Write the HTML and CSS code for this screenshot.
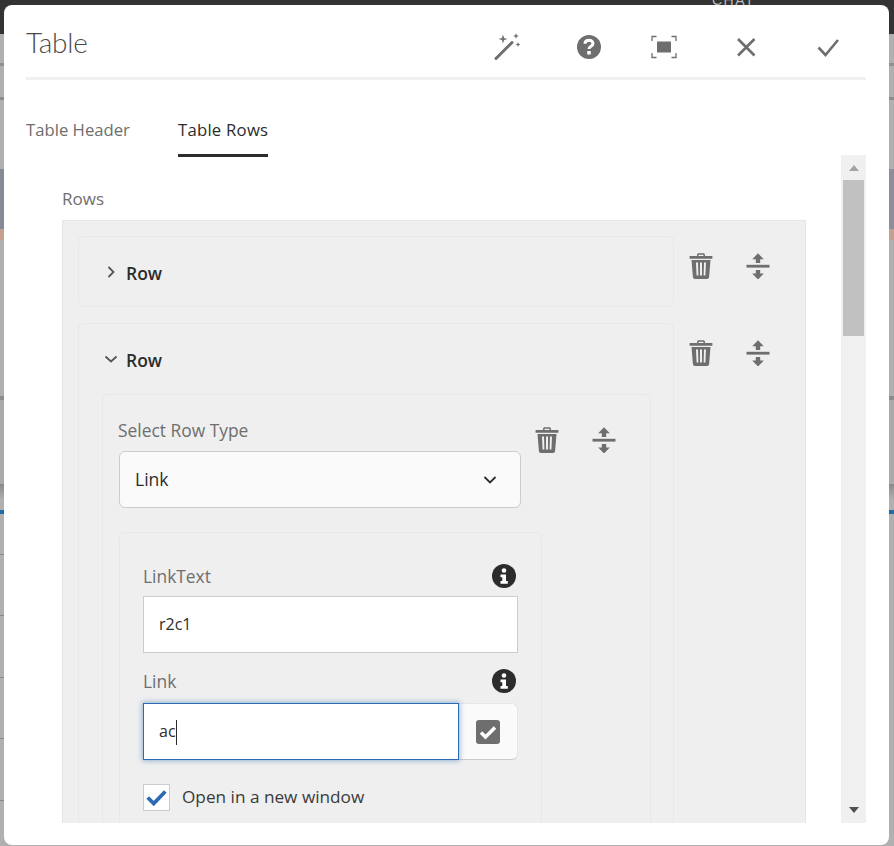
FILE: index.html
```html
<!DOCTYPE html>
<html lang="en">
<head>
<meta charset="utf-8">
<title>Table</title>
<link rel="stylesheet" href="styles.css">
</head>
<body>
<div class="behind"><span class="behind-text">CHAT</span></div>
<div class="dialog">
  <header class="header">
    <h1 class="title">Table</h1>
    <div class="tools">
      <div class="tool-group">
        <svg class="tool" viewBox="0 0 32 32"><path class="wand" d="M5 27.5 21 11.5"/><path class="fill" d="M12 3.5l1.1 3.4 3.4 1.1-3.4 1.1L12 12.5l-1.100-3.400L7.500 8l3.400-1.100zM25 2l.8 2.200 2.200.8-2.200.8L25 8l-.8-2.200L22 5l2.200-.8zM27 11l.7 1.800 1.800.7-1.800.7L27 16l-.7-1.800-1.800-.7 1.800-.7z"/></svg>
        <svg class="tool" viewBox="0 0 32 32"><circle class="fill" cx="16" cy="16" r="12"/><path class="help-mark" d="M12 12.800c0-2.300 1.800-3.600 4-3.600s4 1.300 4 3.300c0 2.800-4 2.800-4 5.500"/><rect class="knock" x="14.200" y="20" width="3.600" height="3.600" rx=".6"/></svg>
      </div>
      <div class="tool-group">
        <svg class="tool" viewBox="0 0 32 32"><rect class="fill" x="9" y="10.500" width="14" height="11"/><path class="corners" d="M4 10V5.500H8.500M23.500 5.500H28V10M28 22v4.500H23.500M8.500 26.500H4V22"/></svg>
        <svg class="tool" viewBox="0 0 32 32"><path class="stroke" d="M8 8l16.500 16.500M24.500 8 8 24.500"/></svg>
        <svg class="tool" viewBox="0 0 32 32"><path class="stroke" d="M6.500 16.500l7 7.500L26 9"/></svg>
      </div>
    </div>
  </header>
  <nav class="tabs">
    <div class="tab">Table Header</div>
    <div class="tab tab-active">Table Rows</div>
  </nav>
  <div class="pane">
    <main class="content">
      <div class="rows-label">Rows</div>
      <section class="multifield">
        <div class="item">
          <div class="card card-collapsed">
            <div class="card-head">
              <svg class="caret-icon" viewBox="0 0 16 16"><path d="M5.500 3 10.500 8 5.500 13"/></svg>
              <span class="card-title">Row</span>
            </div>
          </div>
          <div class="actions">
            <svg class="act" viewBox="0 0 24 26"><use href="#trash"/></svg>
            <svg class="act" viewBox="0 0 24 26"><use href="#move"/></svg>
          </div>
        </div>
        <div class="item">
          <div class="card">
            <div class="card-head">
              <svg class="caret-icon" viewBox="0 0 16 16"><path d="M2.500 5.500 8 10.500 13.500 5.500"/></svg>
              <span class="card-title">Row</span>
            </div>
            <div class="inner">
              <div class="type-row">
                <div class="type-col">
                  <div class="label type-label">Select Row Type</div>
                  <div class="select">
                    <span>Link</span>
                    <svg class="select-caret" viewBox="0 0 14 10"><path d="M1.500 2 7 7.500 12.500 2"/></svg>
                  </div>
                </div>
                <div class="actions actions-inner">
                  <svg class="act" viewBox="0 0 24 26"><use href="#trash"/></svg>
                  <svg class="act" viewBox="0 0 24 26"><use href="#move"/></svg>
                </div>
              </div>
              <div class="link-box">
                <div class="field-head field-head-first">
                  <span class="label">LinkText</span>
                  <svg class="info" viewBox="0 0 24 24"><use href="#info"/></svg>
                </div>
                <div class="input">r2c1</div>
                <div class="field-head field-head-second">
                  <span class="label">Link</span>
                  <svg class="info" viewBox="0 0 24 24"><use href="#info"/></svg>
                </div>
                <div class="path-field">
                  <div class="input input-focus">ac<span class="text-caret"></span></div>
                  <div class="picker">
                    <svg class="picker-icon" viewBox="0 0 24 24"><rect class="fill-dark" width="24" height="24" rx="3"/><path class="picker-check" d="M5 12.500l4.500 4.500L19 7.500"/></svg>
                  </div>
                </div>
                <div class="check-row">
                  <div class="checkbox">
                    <svg class="check-mark" viewBox="0 0 27 27"><path d="M4 13.500l6.500 6.500L23 7"/></svg>
                  </div>
                  <span class="check-label">Open in a new window</span>
                </div>
              </div>
            </div>
          </div>
          <div class="actions">
            <svg class="act" viewBox="0 0 24 26"><use href="#trash"/></svg>
            <svg class="act" viewBox="0 0 24 26"><use href="#move"/></svg>
          </div>
        </div>
      </section>
    </main>
    <aside class="scrollbar">
      <div class="scroll-btn"><span class="tri-up"></span></div>
      <div class="thumb"></div>
      <div class="scroll-rest"></div>
      <div class="scroll-btn scroll-btn-down"><span class="tri-down"></span></div>
    </aside>
  </div>
</div>
<svg class="defs" aria-hidden="true">
  <defs>
    <g id="trash">
      <path fill="#6e6e6e" d="M8 2.200C8 .9 8.800.3 9.800.3h4.400c1 0 1.800.6 1.800 1.900V3h7.400v2.800H.6V3H8zM9.500 3h5V2.100a.3.300 0 0 0-.3-.3H9.800a.3.300 0 0 0-.3.300z"/>
      <path fill="#6e6e6e" fill-rule="evenodd" d="M2.500 7h19l-1.400 17c-.1 1.100-.8 1.900-1.900 1.900H5.800c-1.100 0-1.800-.8-1.900-1.900zM7 9.500l.6 13h1.800L9 9.500zM11 9.500v13h2v-13zM15 9.500l-.4 13h1.800l.6-13z"/>
    </g>
    <g id="move">
      <rect fill="#6e6e6e" x=".5" y="11.800" width="23" height="2.800"/>
      <path fill="#6e6e6e" d="M12 .3l5.800 6h-3.600V10H9.800V6.300H6.200zM12 26.500l5.800-6h-3.600V17H9.800v3.500H6.200z"/>
    </g>
    <g id="info">
      <circle fill="#2c2c2c" cx="12" cy="12" r="12"/>
      <circle fill="#fff" cx="12" cy="6.500" r="2.300"/>
      <path fill="#fff" d="M8.500 10.500H14V17h1.800v2.800H8.500V17h1.800v-3.700H8.500z"/>
    </g>
  </defs>
</svg>
</body>
</html>
```

FILE: styles.css
```css
* {
  box-sizing: border-box;
}

html,
body {
  margin: 0;
  height: 846px;
  overflow: hidden;
}

body {
  font-family: "Open Sans", "Noto Sans", sans-serif;
  color: #2c2c2c;
  background-color: #b0b0b0;
  background-repeat: no-repeat;
  background-size: 4px 846px, 5px 846px, 100% 34px;
  background-position: left top, right top, left top;
  background-image:
    linear-gradient(to bottom,
      transparent 34px, #b0b0b0 34px 63px,
      #909090 63px 66px, #b0b0b0 66px 97px, #8c8c8c 97px 100px,
      #b0b0b0 100px 169px, #858a94 169px 229px, #c3a08f 229px 240px,
      #b0b0b0 240px 396px, #8c8c8c 396px 400px, #aaaaaa 400px 484px,
      #8a8a8a 484px, #b0b0b0 500px 510px, #1f6ca6 510px 514px,
      #b0b0b0 514px 554px, #888 554px 555px, #b0b0b0 555px 615px,
      #888 615px 616px, #b0b0b0 616px 677px, #888 677px 678px,
      #b0b0b0 678px 738px, #888 738px 739px, #b0b0b0 739px 800px,
      #888 800px 801px, #b0b0b0 801px),
    linear-gradient(to bottom,
      transparent 34px, #b0b0b0 34px 63px,
      #909090 63px 66px, #b0b0b0 66px 97px, #8c8c8c 97px 100px,
      #b0b0b0 100px 169px, #8e8e9a 169px 229px, #c3a08f 229px 240px,
      #b0b0b0 240px 396px, #8c8c8c 396px 400px, #aaaaaa 400px 484px,
      #8a8a8a 484px, #b0b0b0 500px 510px, #1f6ca6 510px 514px,
      #b0b0b0 514px),
    linear-gradient(#333333, #333333);
}

.behind {
  height: 5px;
  overflow: hidden;
  padding-left: 712px;
  color: #b9b9b9;
  font-family: "Liberation Sans", sans-serif;
  font-size: 14px;
  line-height: 5px;
}

.behind-text {
  display: block;
  margin-top: -2px;
  letter-spacing: 1.500px;
}

.dialog {
  width: 885px;
  height: 840px;
  margin-left: 4px;
  padding: 0 23px 0 22px;
  background: #fff;
  border-radius: 8px;
}

.header {
  display: flex;
  align-items: center;
  justify-content: space-between;
  height: 75px;
  padding-top: 10px;
  border-bottom: 3px solid #f0f0f0;
}

.title {
  margin: 0;
  margin-top: -8px;
  font-family: "Lato", "Open Sans", sans-serif;
  font-size: 28px;
  font-weight: 300;
  letter-spacing: -0.200px;
  line-height: 40px;
  color: #4b4b4b;
}

.tools {
  display: flex;
  gap: 43px;
  padding-right: 22px;
  margin-top: 1px;
}

.tool-group {
  display: flex;
  gap: 50px;
}

.tool {
  display: block;
  width: 32px;
  height: 32px;
}

.fill {
  fill: #6e6e6e;
}

.wand,
.stroke,
.corners,
.help-mark {
  fill: none;
  stroke: #6e6e6e;
}

.wand {
  stroke-width: 3;
  stroke-linecap: round;
}

.stroke {
  stroke-width: 2.600;
}

.corners {
  stroke-width: 1.300;
}

.help-mark {
  stroke: #fff;
  stroke-width: 3;
}

.knock {
  fill: #fff;
}

.tabs {
  display: flex;
  gap: 48px;
  height: 75px;
  padding-top: 37px;
}

.tab {
  height: 40px;
  font-size: 16.700px;
  line-height: 26px;
  color: #6e6e6e;
}

.tab-active {
  color: #2c2c2c;
  letter-spacing: 0.250px;
  border-bottom: 3px solid #2c2c2c;
}

.pane {
  display: flex;
  width: 840px;
  height: 668px;
}

.content {
  flex: 1;
  display: flex;
  flex-direction: column;
  min-width: 0;
  padding: 0 35px 0 36px;
}

.rows-label {
  flex: none;
  height: 65px;
  padding-top: 32px;
  font-size: 17px;
  line-height: 24px;
  color: #6e6e6e;
}

.multifield {
  flex: 1;
  min-height: 0;
  overflow: hidden;
  display: flex;
  flex-direction: column;
  gap: 16px;
  padding: 15px 0 0 15px;
  background: #efefef;
  border: 1px solid #e6e6e6;
  border-bottom: 0;
}

.item {
  display: flex;
  align-items: flex-start;
  flex: none;
}

.card {
  width: 596px;
  border: 1px solid #e8e8e8;
  border-radius: 5px;
}

.card-collapsed {
  height: 71px;
}

.card-head {
  display: flex;
  align-items: center;
  height: 70px;
  padding-left: 24px;
  gap: 7px;
}

.caret-icon {
  width: 16px;
  height: 16px;
  fill: none;
  stroke: #555;
  stroke-width: 1.800;
}

.card-title {
  padding-top: 2px;
  font-size: 17.500px;
  font-weight: 600;
  color: #2c2c2c;
}

.actions {
  display: flex;
  gap: 33px;
  margin: 17px 0 0 15px;
}

.act {
  display: block;
  width: 24px;
  height: 26px;
}

.inner {
  margin: 0 22px 0 23px;
  padding: 0 0 0 15px;
  border: 1px solid #e8e8e8;
  border-bottom: 0;
  border-radius: 5px 5px 0 0;
}

.type-row {
  display: flex;
  align-items: flex-start;
}

.type-col {
  width: 403px;
}

.label {
  font-size: 17.400px;
  line-height: 24px;
  color: #6e6e6e;
}

.type-label {
  padding-top: 23px;
  height: 56px;
}

.select {
  display: flex;
  align-items: center;
  justify-content: space-between;
  height: 57px;
  margin-left: 1px;
  padding: 0 23px 2px 15px;
  background: #fafafa;
  border: 1px solid #cccccc;
  border-radius: 6px;
  font-size: 17.500px;
}

.select-caret {
  width: 14px;
  height: 10px;
  margin-top: 2px;
  fill: none;
  stroke: #2c2c2c;
  stroke-width: 1.800;
}

.actions-inner {
  margin: 32px 0 0 14px;
}

.link-box {
  width: 423px;
  margin: 24px 0 0 1px;
  padding: 0 23px 0 23px;
  height: 330px;
  border: 1px solid #e8e8e8;
  border-bottom: 0;
  border-radius: 5px 5px 0 0;
}

.field-head {
  display: flex;
  align-items: center;
  justify-content: space-between;
  padding-right: 2px;
}

.field-head-first {
  height: 24px;
  margin-top: 31px;
  margin-bottom: 8px;
}

.field-head-second {
  height: 24px;
  margin-top: 16px;
  margin-bottom: 10px;
}

.info {
  display: block;
  width: 24px;
  height: 24px;
}

.input {
  height: 57px;
  padding: 0 15px;
  background: #fff;
  border: 1px solid #cccccc;
  font-size: 16px;
  line-height: 55px;
  color: #2c2c2c;
}

.path-field {
  display: flex;
}

.input-focus {
  flex: 1;
  border-color: #2d6ab4;
  box-shadow: 0 0 5px 1px rgba(45, 106, 180, 0.45);
  position: relative;
}

.text-caret {
  display: inline-block;
  width: 1.500px;
  height: 25px;
  background: #2c2c2c;
  vertical-align: middle;
}

.picker {
  display: flex;
  align-items: center;
  justify-content: center;
  width: 59px;
  height: 57px;
  padding-top: 1px;
  background: #fafafa;
  border: 1px solid #e6e6e6;
  border-left: 0;
  border-bottom-color: #cccccc;
  border-radius: 0 6px 6px 0;
}

.picker-icon {
  width: 24px;
  height: 24px;
}

.fill-dark {
  fill: #6e6e6e;
}

.picker-check {
  fill: none;
  stroke: #fff;
  stroke-width: 3.500;
}

.check-row {
  display: flex;
  align-items: center;
  gap: 12px;
  margin-top: 24px;
}

.checkbox {
  width: 27px;
  height: 27px;
  background: #fff;
  border: 1px solid #cccccc;
}

.check-mark {
  display: block;
  width: 25px;
  height: 25px;
  fill: none;
  stroke: #2d6ab4;
  stroke-width: 4;
}

.check-label {
  margin-top: -2px;
  font-size: 17.200px;
  color: #3a3a3a;
}

.scrollbar {
  flex: none;
  display: flex;
  flex-direction: column;
  width: 25px;
  background: #f0f0f0;
}

.scroll-btn {
  flex: none;
  display: flex;
  align-items: center;
  justify-content: center;
  height: 25px;
}

.scroll-btn-down {
  height: 27px;
}

.tri-up {
  width: 0;
  height: 0;
  border-left: 5.500px solid transparent;
  border-right: 5.500px solid transparent;
  border-bottom: 6px solid #a3a3a3;
}

.tri-down {
  width: 0;
  height: 0;
  border-left: 5.500px solid transparent;
  border-right: 5.500px solid transparent;
  border-top: 6px solid #505050;
}

.thumb {
  flex: none;
  width: 21px;
  height: 156px;
  margin-left: 2px;
  background: #c1c1c1;
}

.scroll-rest {
  flex: 1;
}

.defs {
  display: none;
}
```
